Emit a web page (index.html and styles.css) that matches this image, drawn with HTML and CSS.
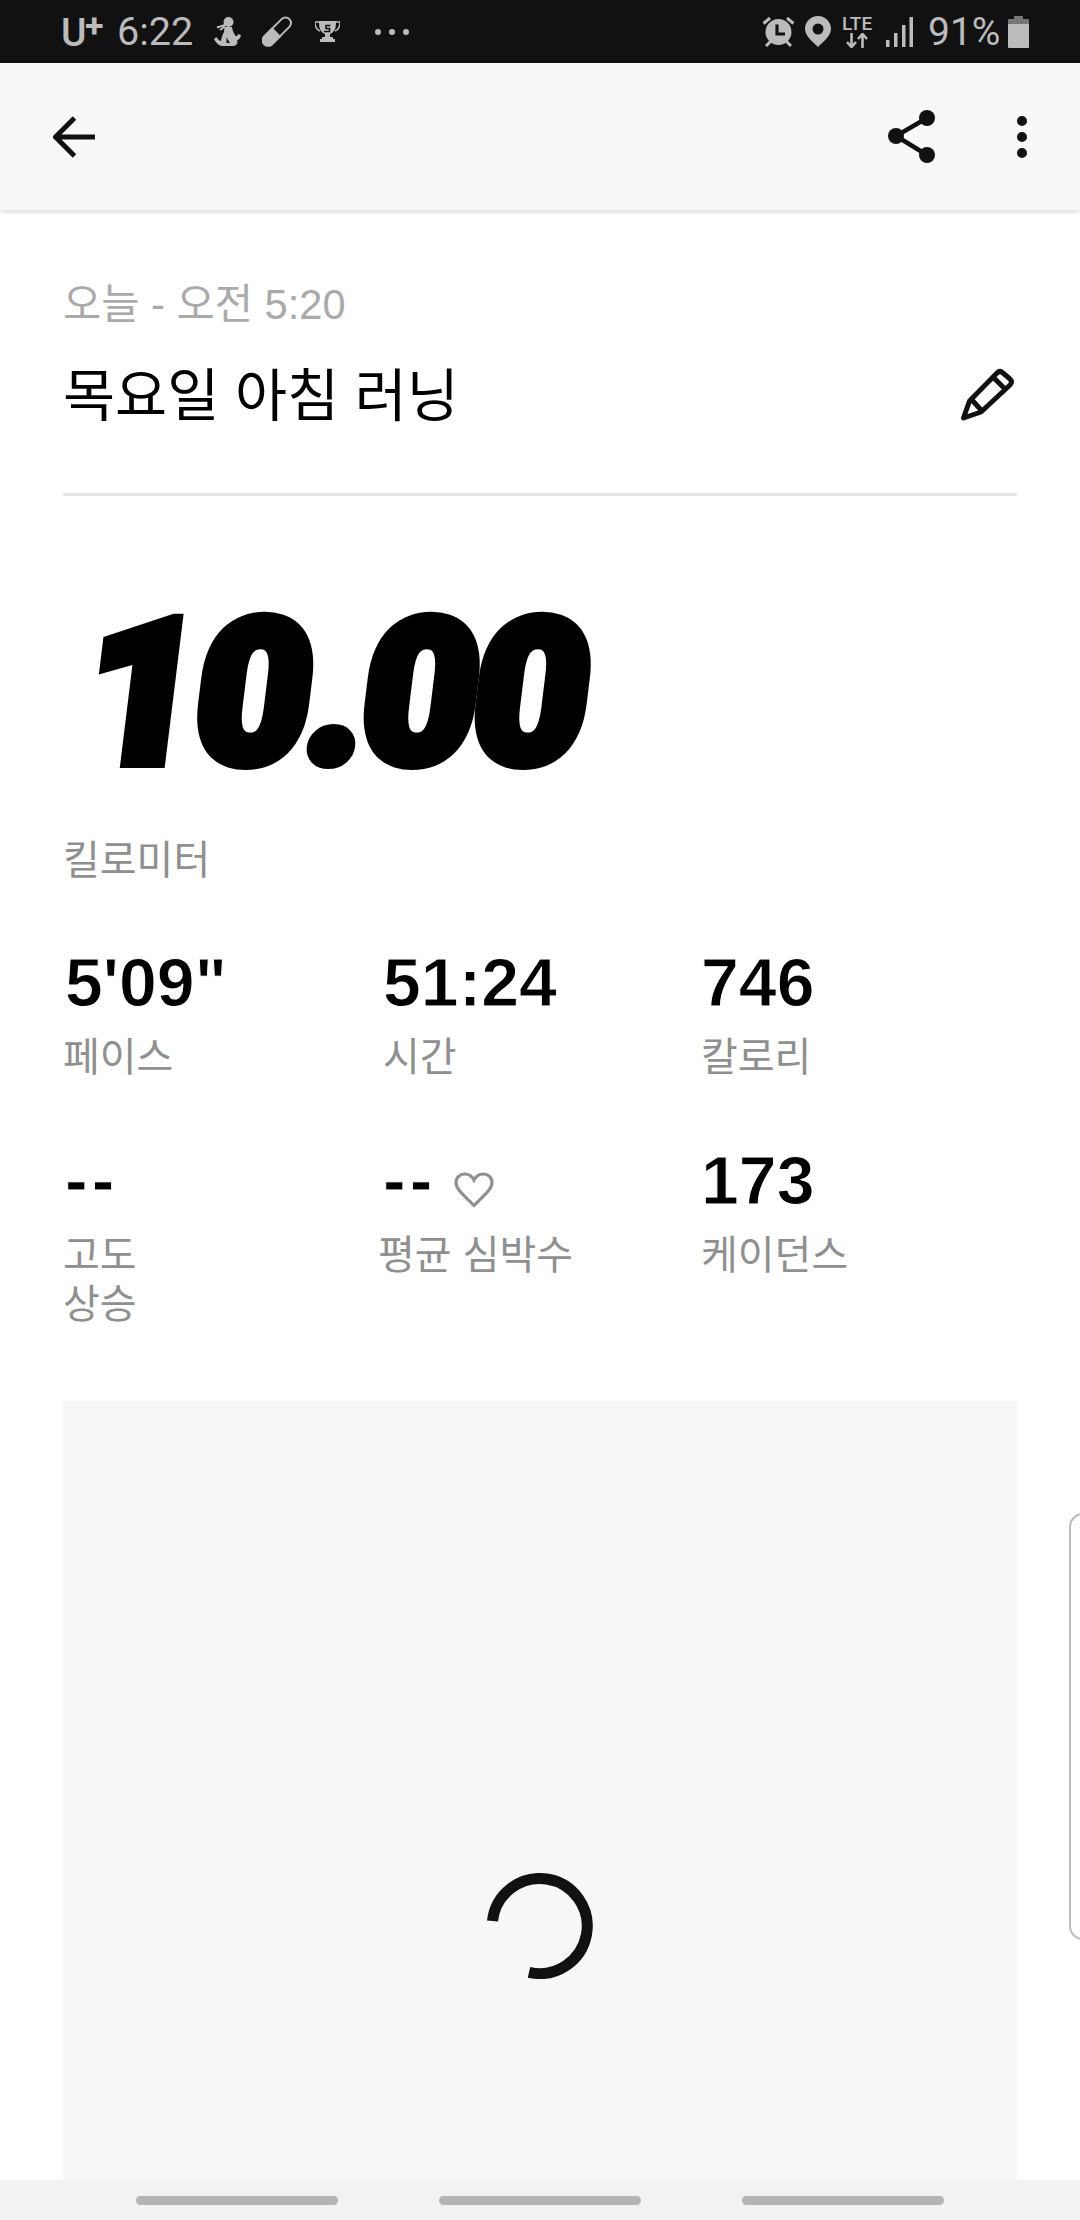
FILE: index.html
```html
<!DOCTYPE html>
<html lang="ko">
<head>
<meta charset="utf-8">
<title>러닝</title>
<link rel="stylesheet" href="styles.css">
</head>
<body>
<div class="page">
  <div class="status">
    <div class="status-left">
      <span class="carrier"><span class="u">U</span><span class="plus">+</span></span>
      <span class="clock">6:22</span>
      <svg class="ic ic-fig" viewBox="0 0 27 29"><circle cx="14.500" cy="5" r="5" fill="#bbb"/><path d="M11 8 3 10.500M11 9.500 6 13" stroke="#bbb" stroke-width="2"/><path d="M10.500 10h7.500c.5 4 2 6.500 3.500 9 1.500 0 2.500-.5 3-2l2.500 1c-.5 3-2 4.500-4 5.500l.5 1.500c0 2-2 4-4.500 4H9c-3 0-6-1.500-9-7l2.500-2c1 2 2.500 3.500 4.500 4 .5-4 1.500-6 3-9z" fill="#bbb"/><path d="M12.500 20.500v5.500h3.500z" fill="#111"/></svg>
      <svg class="ic ic-pill" viewBox="0 0 30 31"><g transform="rotate(-45 15 15.500)"><rect x="-2.500" y="10" width="35" height="11" rx="5.500" fill="none" stroke="#bbb" stroke-width="2"/><path d="M14.500 9H2.500a6.500 6.500 0 0 0 0 13h12z" fill="#bbb"/></g></svg>
      <svg class="ic ic-trophy" viewBox="0 0 25 22"><path d="M4 0h17c0 7-1 11-6 13v3h3v2h2v3H5v-3h2v-2h3v-3C5 11 4 7 4 0z" fill="#bbb"/><path d="M4 1H0c0 5 2 8 5 9M21 1h4c0 5-2 8-5 9" fill="none" stroke="#bbb" stroke-width="1.500"/><path d="M15.500 4.500h-4.500v3h3.500v3H9" fill="none" stroke="#111" stroke-width="1.500"/></svg>
      <span class="dots"><i></i><i></i><i></i></span>
    </div>
    <div class="status-right">
      <svg class="ic ic-alarm" viewBox="0 0 33 31"><circle cx="16.500" cy="16" r="13" fill="#bbb"/><path d="M1.500 7.500 8 2M31.500 7.500 25 2M4 30l5-5M29 30l-5-5" stroke="#bbb" stroke-width="3"/><path d="M15 8.500V18h8" fill="none" stroke="#111" stroke-width="3.200"/></svg>
      <svg class="ic ic-pin" viewBox="0 0 26 31"><path fill-rule="evenodd" d="M13 0C5.800 0 0 5.800 0 13c0 7 8 13 13 18 5-5 13-11 13-18C26 5.800 20.200 0 13 0zm0 7.500a5.500 5.500 0 1 1 0 11 5.500 5.500 0 0 1 0-11z" fill="#bbb"/></svg>
      <span class="lte"><span class="lte-t">LTE</span><svg class="ic-arrows" viewBox="0 0 22 15"><path d="M5.500 0v13M1 9l4.500 5L10 9M16.500 15V2M12 6l4.500-5L21 6" fill="none" stroke="#bbb" stroke-width="2.600"/></svg></span>
      <svg class="ic ic-signal" viewBox="0 0 27 30"><path d="M0 23h3.500v7H0zM8 16h3.500v14H8zM16 8h3.500v22H16zM23.500 0H27v30h-3.500z" fill="#bbb"/></svg>
      <span class="batt-t">91%</span>
      <svg class="ic ic-batt" viewBox="0 0 21 32"><path d="M6 0h9v3H6z" fill="#777"/><path d="M1 3h19a1 1 0 0 1 1 1v4H0V4a1 1 0 0 1 1-1z" fill="#777"/><path d="M0 8h21v23a1 1 0 0 1-1 1H1a1 1 0 0 1-1-1z" fill="#bbb"/></svg>
    </div>
  </div>

  <header class="appbar">
    <svg class="ic-back" viewBox="0 0 42 42"><path d="M21.500 2 2.500 21l19 19M3 21h39" fill="none" stroke="#111" stroke-width="5"/></svg>
    <svg class="ic-share" viewBox="0 0 47 53"><path d="M39 8 8 26l31 19" fill="none" stroke="#111" stroke-width="4.500"/><circle cx="39" cy="8" r="8" fill="#111"/><circle cx="8" cy="26" r="8" fill="#111"/><circle cx="39" cy="45" r="8" fill="#111"/></svg>
    <svg class="ic-more" viewBox="0 0 10 42"><circle cx="5" cy="5" r="5" fill="#111"/><circle cx="5" cy="21" r="5" fill="#111"/><circle cx="5" cy="37" r="5" fill="#111"/></svg>
  </header>

  <main class="content">
    <section class="head">
      <div class="date">오늘 - 오전 5:20</div>
      <div class="title-row">
        <h1 class="title">목요일 아침 러닝</h1>
        <svg class="ic-edit" viewBox="0 0 54 54"><path d="M3.500 51 9.500 34 37 6q3-3 6 0l7 6q3 3 0 6L21 45zM33 10l13 13M12 33l10 11" fill="none" stroke="#111" stroke-width="5" stroke-linejoin="round"/></svg>
      </div>
    </section>

    <section class="hero">
      <div class="distance">10.00</div>
      <div class="unit">킬로미터</div>
    </section>

    <section class="stats">
      <div class="stat"><div class="val">5'09"</div><div class="lab">페이스</div></div>
      <div class="stat stat-in"><div class="val">51:24</div><div class="lab">시간</div></div>
      <div class="stat stat-in"><div class="val">746</div><div class="lab">칼로리</div></div>
      <div class="stat"><div class="val val-dash">--</div><div class="lab">고도<br>상승</div></div>
      <div class="stat stat-hr"><div class="val val-dash">--<svg class="ic-heart" viewBox="0 0 40 36"><path d="M20 33.500C12 25 2 18 2 10.500 2 5.500 6 2 10.500 2c4 0 7.500 2 9.500 6 2-4 5.500-6 9.500-6C34 2 38 5.500 38 10.500 38 18 28 25 20 33.500z" fill="none" stroke="#8f8f8f" stroke-width="3.200"/></svg></div><div class="lab">평균 심박수</div></div>
      <div class="stat stat-in"><div class="val">173</div><div class="lab">케이던스</div></div>
    </section>

    <section class="map">
      <svg class="spinner" viewBox="0 0 106 106"><path d="M5.500 48A47.500 47.500 0 1 1 42 99.300" fill="none" stroke="#111" stroke-width="11"/></svg>
    </section>
  </main>

  <div class="peek"></div>

  <nav class="nav">
    <span class="pill"></span><span class="pill"></span><span class="pill"></span>
  </nav>
</div>
</body>
</html>
```

FILE: styles.css
```css
* { box-sizing: border-box; }
html, body { margin: 0; padding: 0; background: #fff; }
.page {
  position: relative;
  width: 1080px;
  height: 2220px;
  overflow: hidden;
  display: flex;
  flex-direction: column;
  font-family: "Liberation Sans", "Noto Sans CJK KR", sans-serif;
  background: #fff;
}

/* status bar */
.status {
  height: 63px;
  flex: none;
  background: #111;
  color: #bbb;
  display: flex;
  justify-content: space-between;
  align-items: center;
  padding: 0 51px 0 61px;
  font-family: Roboto, "Liberation Sans", sans-serif;
}
.status-left, .status-right { display: flex; align-items: center; }
.ic { display: block; flex: none; }
.carrier { display: flex; width: 43px; height: 63px; align-items: flex-start; }
.u { font-size: 39px; font-weight: 500; line-height: 66px; width: 24px; }
.plus { font-size: 34px; font-weight: 700; line-height: 34px; margin-top: 8px; width: 19px; }
.clock { font-size: 39.500px; font-weight: 400; margin-left: 13px; line-height: 63px; width: 72px; }
.ic-fig { width: 27px; height: 29px; margin-left: 25px; }
.ic-pill { width: 30px; height: 31px; margin-left: 21px; }
.ic-trophy { width: 25px; height: 22px; margin-left: 23px; }
.dots { display: flex; gap: 8px; margin-left: 35px; }
.dots i { width: 6px; height: 6px; border-radius: 50%; background: #bbb; display: block; }
.ic-alarm { width: 33px; height: 31px; }
.ic-pin { width: 26px; height: 31px; margin-left: 10px; }
.lte { width: 30px; margin-left: 11px; display: flex; flex-direction: column; align-items: center; }
.lte-t { font-size: 19px; font-weight: 500; line-height: 18px; }
.ic-arrows { width: 22px; height: 15px; display: block; }
.ic-signal { width: 27px; height: 30px; margin-left: 14px; }
.batt-t { font-size: 39px; font-weight: 400; margin-left: 15px; width: 70px; }
.ic-batt { width: 21px; height: 32px; margin-left: 10px; }

/* app bar */
.appbar {
  height: 147px;
  flex: none;
  background: #f8f8f8;
  box-shadow: 0 2px 5px rgba(0, 0, 0, .16);
  display: flex;
  align-items: center;
  padding: 0 53px;
  position: relative;
  z-index: 1;
}
.ic-back { width: 42px; height: 42px; display: block; }
.ic-share { width: 47px; height: 53px; margin-left: auto; display: block; }
.ic-more { width: 10px; height: 42px; margin-left: 82px; display: block; }

/* content */
.content {
  flex: 1;
  min-height: 0;
  overflow: hidden;
  display: flex;
  flex-direction: column;
  padding: 0 63px;
}
.head { border-bottom: 3px solid #e5e5e5; height: 286px; padding-top: 70px; flex: none; }
.date { font-size: 41.600px; line-height: 50px; color: #aaa; }
.title-row { display: flex; justify-content: space-between; align-items: center; margin-top: 31px; height: 66px; }
.title { margin: 0; padding-top: 6px; font-size: 56.600px; font-weight: 400; line-height: 66px; color: #000; }
.ic-edit { width: 54px; height: 54px; display: block; margin-right: 3px; }

.hero { padding-top: 92px; flex: none; }
.distance {
  font-family: Roboto, "Liberation Sans", sans-serif;
  font-weight: 900;
  font-size: 200px;
  line-height: 212px;
  height: 236px;
  color: #000;
  -webkit-text-stroke: 12px #000;
  letter-spacing: -5px;
  padding-left: 10px;
  transform: skewX(-7deg);
  transform-origin: 0 212px;
}
.unit { font-size: 40px; line-height: 50px; color: #8f8f8f; margin-top: 11px; }

.stats {
  display: grid;
  grid-template-columns: 318px 318px 318px;
  grid-auto-rows: 198px;
  flex: none;
  height: 396px;
  margin: 59px 0 61px;
}
.val {
  font-size: 68px;
  line-height: 76px;
  height: 76px;
  color: #000;
  font-weight: 700;
  padding-left: 2px;
  -webkit-text-stroke: 1px #fff;
}
.val-dash { letter-spacing: 4px; }
.lab { font-size: 40px; line-height: 49px; color: #8f8f8f; margin-top: 13px; }
.ic-heart { width: 40px; height: 36px; vertical-align: -4px; margin-left: 18px; }
.stat-hr .lab { margin-left: -3px; }
.stat-in .lab { margin-left: 2px; }

.map {
  flex: none;
  height: 1050px;
  background: #f7f7f7;
  display: flex;
  justify-content: center;
  align-items: center;
}
.spinner { width: 106px; height: 106px; display: block; }

.peek {
  position: absolute;
  left: 1069px;
  top: 1513px;
  width: 40px;
  height: 427px;
  border: 2px solid #bbb;
  border-radius: 14px;
}

/* bottom nav */
.nav {
  height: 40px;
  flex: none;
  background: #f2f2f2;
  display: flex;
  justify-content: center;
  align-items: center;
  gap: 101px;
}
.pill { width: 202px; height: 9px; border-radius: 5px; background: #b4b4b4; display: block; }
```
